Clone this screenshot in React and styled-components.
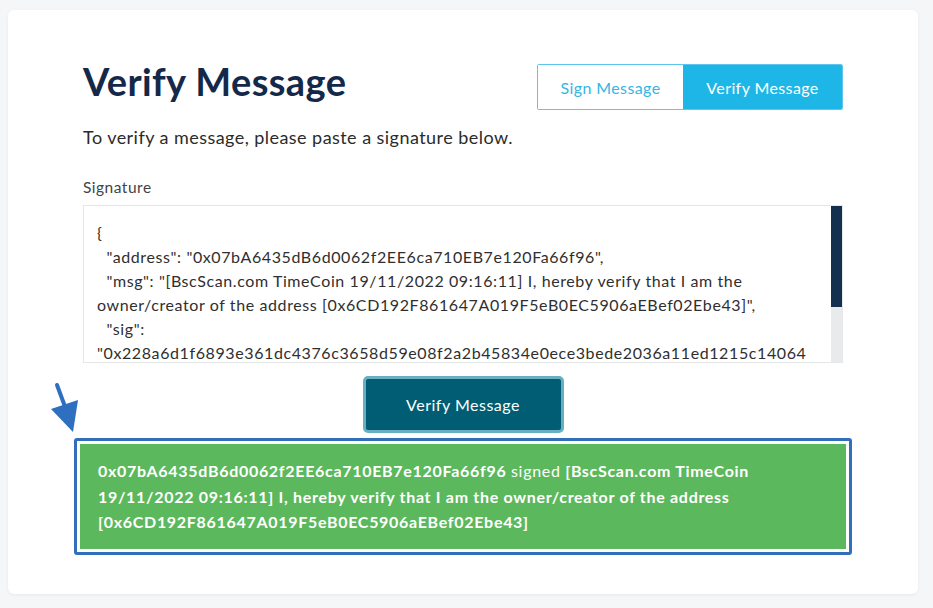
import React from 'react';
import styled, { createGlobalStyle } from 'styled-components';

const GlobalStyle = createGlobalStyle`
  html, body {
    margin: 0;
    padding: 0;
    background: #f5f6f8;
  }
  body {
    font-family: Lato, "Open Sans", sans-serif;
  }
`;

const Page = styled.div`
  padding: 10px 15px 14px 8px;
`;

const Card = styled.div`
  position: relative;
  background: #fff;
  border-radius: 6px;
  box-shadow: 0 1px 3px rgba(0, 0, 0, 0.06);
  height: 584px;
  box-sizing: border-box;
  padding: 54px 75px 0 75px;
`;

const Header = styled.div`
  display: flex;
  justify-content: space-between;
  align-items: flex-start;
`;

const Title = styled.h1`
  margin: 0;
  font-size: 38px;
  font-weight: 700;
  line-height: 34px;
  letter-spacing: 0.4px;
  color: #14294a;
`;

const Toggle = styled.div`
  display: flex;
  border: 1px solid #5cc6ee;
  border-radius: 2px;
  overflow: hidden;
`;

const ToggleButton = styled.button`
  font-family: inherit;
  font-size: 16px;
  letter-spacing: 0.4px;
  height: 44px;
  padding: 0;
  border: none;
  background: ${p => (p.$active ? '#1db6e6' : '#fff')};
  color: ${p => (p.$active ? '#fff' : '#35b5e5')};
  width: ${p => p.$w}px;
`;

const Intro = styled.p`
  margin: 16px 0 0;
  font-size: 18px;
  letter-spacing: 0.45px;
  color: #2b2b2b;
`;

const Label = styled.div`
  margin-top: 30px;
  font-size: 15.5px;
  letter-spacing: 0.5px;
  color: #444;
`;

const Field = styled.div`
  display: flex;
  margin-top: 9px;
  height: 158px;
  border: 1px solid #e6e7e9;
  box-sizing: border-box;
`;

const FieldText = styled.div`
  flex: 1;
  overflow: hidden;
  padding: 15px 12px 0 13px;
  font-size: 16px;
  letter-spacing: 0.6px;
  line-height: 24px;
  color: #2f2f2f;
  white-space: pre;
`;

const ScrollTrack = styled.div`
  width: 11px;
  background: #e9eaec;
  display: flex;
  flex-direction: column;
`;

const ScrollThumb = styled.div`
  height: 101px;
  background: #14304f;
`;

const ButtonRow = styled.div`
  display: flex;
  justify-content: center;
  margin-top: 13px;
`;

const SubmitButton = styled.button`
  font-family: inherit;
  font-size: 16px;
  letter-spacing: 0.5px;
  color: #fff;
  width: 201px;
  height: 57px;
  background: #005d74;
  border: 3px solid #68afc4;
  border-radius: 5px;
`;

const ResultFrame = styled.div`
  margin: 5px -9px 0;
  border: 3px solid #3170b9;
  border-radius: 3px;
  padding: 3px;
`;

const Result = styled.div`
  background: #5cb85c;
  color: #fff;
  font-size: 16px;
  font-weight: 700;
  letter-spacing: 0.7px;
  line-height: 25.5px;
  padding: 14px 18px 14px;
`;

const Plain = styled.span`
  font-weight: 400;
`;

const Arrow = styled.svg`
  position: absolute;
  left: 34px;
  top: 364px;
`;

const signature = `{
  "address": "0x07bA6435dB6d0062f2EE6ca710EB7e120Fa66f96",
  "msg": "[BscScan.com TimeCoin 19/11/2022 09:16:11] I, hereby verify that I am the
owner/creator of the address [0x6CD192F861647A019F5eB0EC5906aEBef02Ebe43]",
  "sig":
"0x228a6d1f6893e361dc4376c3658d59e08f2a2b45834e0ece3bede2036a11ed1215c14064
8b0d5f7e6a4c2e1d9b7a5f3c1e0d2b4a6c8e1c",
  "version": "2"
}`;

export default function App() {
  return (
    <>
      <GlobalStyle />
      <Page>
        <Card>
          <Header>
            <Title>Verify Message</Title>
            <Toggle>
              <ToggleButton $w={145}>Sign Message</ToggleButton>
              <ToggleButton $w={159} $active>Verify Message</ToggleButton>
            </Toggle>
          </Header>
          <Intro>To verify a message, please paste a signature below.</Intro>
          <Label>Signature</Label>
          <Field>
            <FieldText>{signature}</FieldText>
            <ScrollTrack>
              <ScrollThumb />
            </ScrollTrack>
          </Field>
          <ButtonRow>
            <SubmitButton>Verify Message</SubmitButton>
          </ButtonRow>
          <ResultFrame>
            <Result>
              0x07bA6435dB6d0062f2EE6ca710EB7e120Fa66f96 <Plain>signed</Plain> [BscScan.com TimeCoin
              19/11/2022 09:16:11] I, hereby verify that I am the owner/creator of the address
              [0x6CD192F861647A019F5eB0EC5906aEBef02Ebe43]
            </Result>
          </ResultFrame>
          <Arrow width="40" height="62" viewBox="0 0 40 62">
            <line x1="15" y1="11" x2="25" y2="38" stroke="#2f6fbf" strokeWidth="4" strokeLinecap="round" />
            <polygon points="9,35 36,26 31,58" fill="#2f6fbf" />
          </Arrow>
        </Card>
      </Page>
    </>
  );
}
